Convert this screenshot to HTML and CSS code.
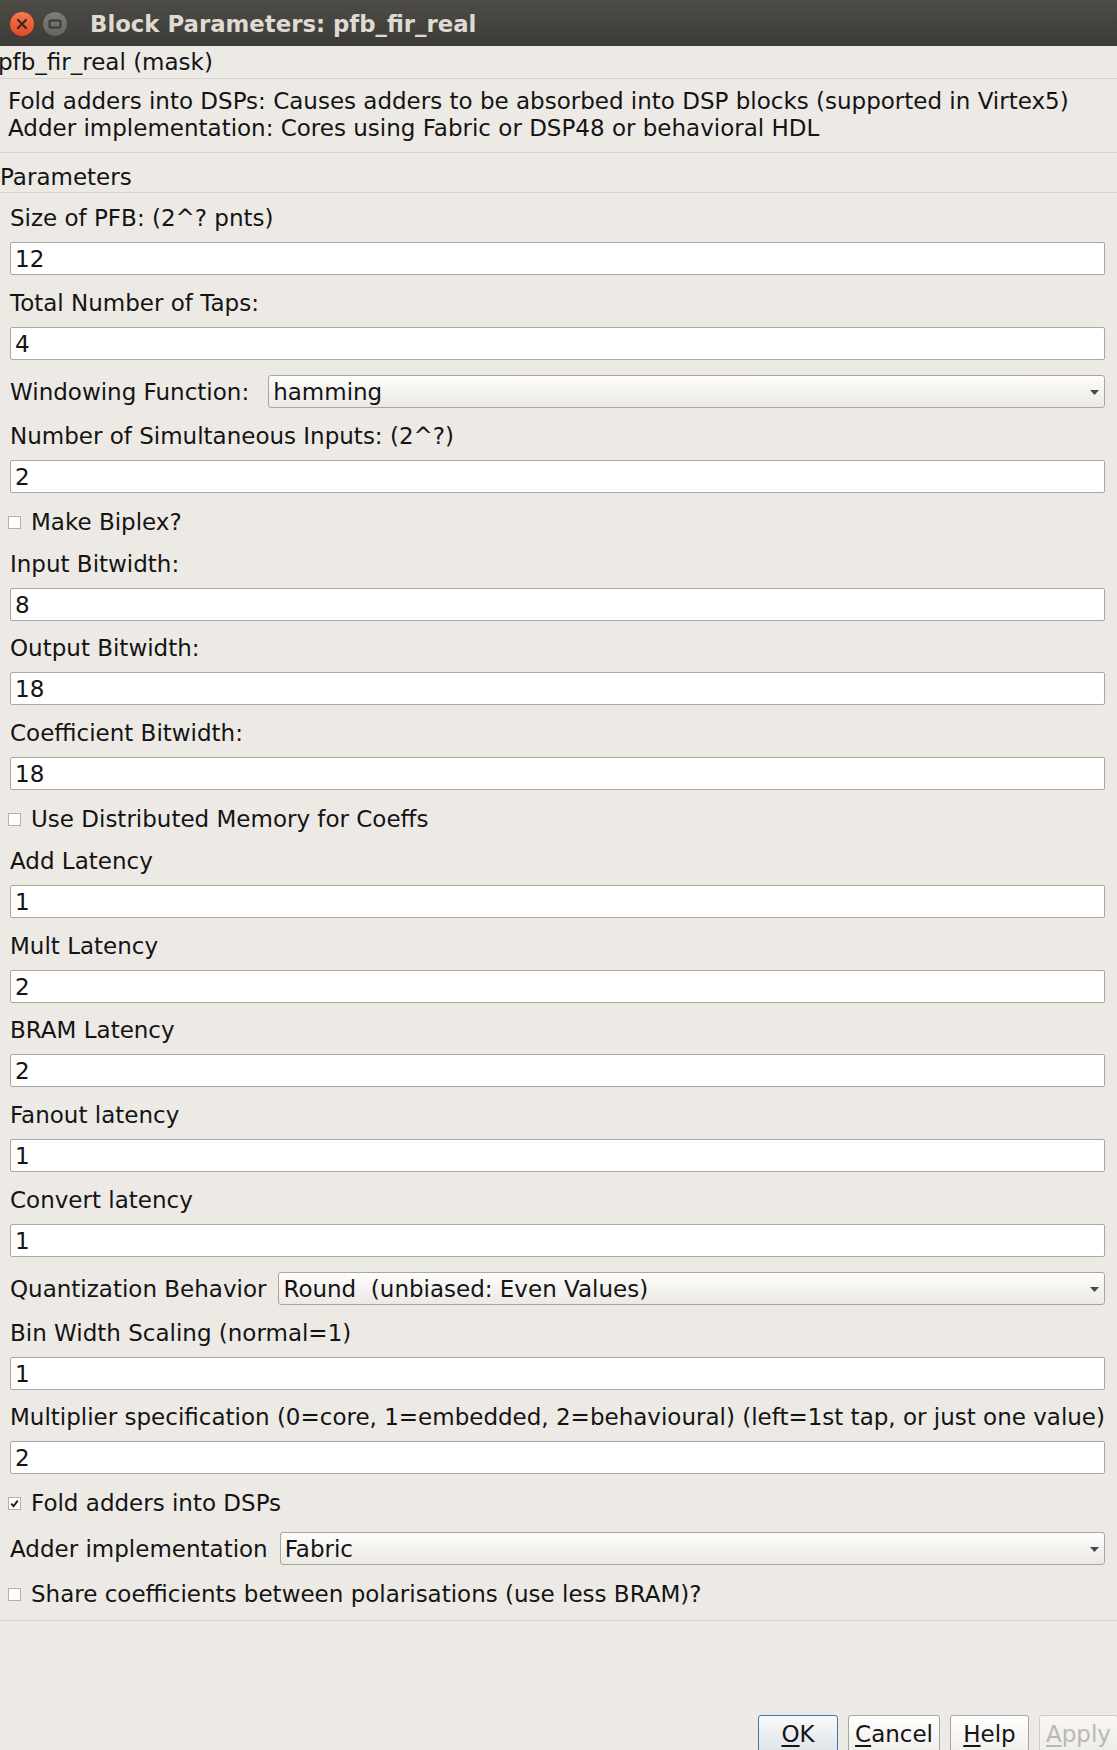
FILE: index.html
```html
<!DOCTYPE html>
<html>
<head>
<meta charset="utf-8">
<title>Block Parameters: pfb_fir_real</title>
<link rel="stylesheet" href="styles.css">
</head>
<body>
<div class="window">
  <div class="titlebar">
    <svg class="wbtn" width="26" height="26" viewBox="0 0 26 26">
      <defs>
        <linearGradient id="og" x1="0" y1="0" x2="0" y2="1">
          <stop offset="0" stop-color="#f47a55"/>
          <stop offset="1" stop-color="#df4a1f"/>
        </linearGradient>
        <linearGradient id="gg" x1="0" y1="0" x2="0" y2="1">
          <stop offset="0" stop-color="#7f7e78"/>
          <stop offset="1" stop-color="#64635d"/>
        </linearGradient>
      </defs>
      <circle cx="13" cy="13" r="12.5" fill="url(#og)" stroke="#3a2a22" stroke-width="0.6"/>
      <path d="M9 9 L17 17 M17 9 L9 17" stroke="#3b2620" stroke-width="2.2" stroke-linecap="round"/>
    </svg>
    <svg class="wbtn" width="26" height="26" viewBox="0 0 26 26">
      <circle cx="13" cy="13" r="12.5" fill="url(#gg)" stroke="#33322e" stroke-width="0.6"/>
      <rect x="7.5" y="9.5" width="11" height="7" rx="1.5" fill="none" stroke="#3a3935" stroke-width="2"/>
    </svg>
    <div class="title">Block Parameters: pfb_fir_real</div>
  </div>

  <div class="mask-name">pfb_fir_real (mask)</div>

  <div class="desc">
    <div>Fold adders into DSPs: Causes adders to be absorbed into DSP blocks (supported in Virtex5)</div>
    <div>Adder implementation: Cores using Fabric or DSP48 or behavioral HDL</div>
  </div>

  <div class="section-title">Parameters</div>

  <div class="form">
    <div class="lbl first">Size of PFB: (2^? pnts)</div>
    <div class="field">12</div>

    <div class="lbl">Total Number of Taps:</div>
    <div class="field">4</div>

    <div class="select-row">
      <span class="inline-lbl wide">Windowing Function:</span>
      <div class="select">hamming<svg class="arrow" width="9" height="5" viewBox="0 0 9 5"><path d="M0 0 H9 L4.5 5 Z" fill="#474747"/></svg></div>
    </div>

    <div class="lbl">Number of Simultaneous Inputs: (2^?)</div>
    <div class="field">2</div>

    <div class="check-row"><span class="box"></span>Make Biplex?</div>

    <div class="lbl">Input Bitwidth:</div>
    <div class="field">8</div>

    <div class="lbl">Output Bitwidth:</div>
    <div class="field">18</div>

    <div class="lbl">Coefficient Bitwidth:</div>
    <div class="field">18</div>

    <div class="check-row"><span class="box"></span>Use Distributed Memory for Coeffs</div>

    <div class="lbl">Add Latency</div>
    <div class="field">1</div>

    <div class="lbl">Mult Latency</div>
    <div class="field">2</div>

    <div class="lbl">BRAM Latency</div>
    <div class="field">2</div>

    <div class="lbl">Fanout latency</div>
    <div class="field">1</div>

    <div class="lbl">Convert latency</div>
    <div class="field">1</div>

    <div class="select-row">
      <span class="inline-lbl">Quantization Behavior</span>
      <div class="select">Round&nbsp; (unbiased: Even Values)<svg class="arrow" width="9" height="5" viewBox="0 0 9 5"><path d="M0 0 H9 L4.5 5 Z" fill="#474747"/></svg></div>
    </div>

    <div class="lbl">Bin Width Scaling (normal=1)</div>
    <div class="field">1</div>

    <div class="lbl">Multiplier specification (0=core, 1=embedded, 2=behavioural) (left=1st tap, or just one value)</div>
    <div class="field">2</div>

    <div class="check-row"><span class="box checked"><svg width="11" height="11" viewBox="0 0 11 11"><path d="M2.2 5.6 L4.5 8.2 L8.8 2.6" fill="none" stroke="#222222" stroke-width="1.9"/></svg></span>Fold adders into DSPs</div>

    <div class="select-row">
      <span class="inline-lbl">Adder implementation</span>
      <div class="select">Fabric<svg class="arrow" width="9" height="5" viewBox="0 0 9 5"><path d="M0 0 H9 L4.5 5 Z" fill="#474747"/></svg></div>
    </div>

    <div class="check-row"><span class="box"></span>Share coefficients between polarisations (use less BRAM)?</div>
  </div>

  <div class="footer">
    <div class="buttons">
      <div class="btn default"><u>O</u>K</div>
      <div class="btn"><u>C</u>ancel</div>
      <div class="btn"><u>H</u>elp</div>
      <div class="btn disabled"><u>A</u>pply</div>
    </div>
  </div>
</div>
</body>
</html>
```

FILE: styles.css
```css
html, body {
  margin: 0;
  padding: 0;
}

body {
  width: 1117px;
  height: 1750px;
  overflow: hidden;
  background: #edeae6;
  font-family: "DejaVu Sans", "Liberation Sans", sans-serif;
  font-size: 23px;
  color: #141414;
}

.window {
  display: flex;
  flex-direction: column;
  min-height: 1750px;
}

.titlebar {
  height: 46px;
  box-sizing: border-box;
  display: flex;
  align-items: center;
  padding-left: 9px;
  gap: 7px;
  background: linear-gradient(#4d4c47, #3c3b37);
}

.wbtn {
  flex: none;
  margin-top: 1px;
}

.title {
  margin-left: 15px;
  padding-top: 2px;
  font-weight: bold;
  font-size: 22.8px;
  color: #dfdbd2;
  white-space: nowrap;
}

.mask-name {
  line-height: 30px;
  padding: 1px 0 1px 0;
  margin-left: -2px;
  border-bottom: 1px solid #d8d5d0;
}

.desc {
  padding: 9px 8px 11px 8px;
  line-height: 26.7px;
  border-bottom: 1px solid #d8d5d0;
}

.section-title {
  line-height: 30px;
  padding: 9px 0 0 0;
  border-bottom: 1px solid #d8d5d0;
}

.form {
  display: flex;
  flex-direction: column;
  padding: 0 12px 12px 10px;
  border-bottom: 1px solid #d8d5d0;
}

.lbl {
  line-height: 30px;
  margin: 12.75px 0 9px 0;
  white-space: nowrap;
}

.lbl.first {
  margin-top: 10px;
}

.field {
  height: 33px;
  box-sizing: border-box;
  border: 1px solid #aaa7a1;
  border-radius: 2px;
  background: #ffffff;
  line-height: 30px;
  padding: 1px 4px 0 4px;
}

.select-row {
  display: flex;
  align-items: center;
  margin-top: 15px;
  height: 33px;
}

.inline-lbl {
  white-space: nowrap;
  margin-right: 12px;
  line-height: 30px;
  padding-top: 1px;
}

.inline-lbl.wide {
  margin-right: 19px;
}

.select {
  flex: 1;
  position: relative;
  height: 33px;
  box-sizing: border-box;
  border: 1px solid #a9a6a0;
  border-radius: 3px;
  background: linear-gradient(#fdfdfc, #ece9e5);
  line-height: 30px;
  padding: 1px 4px 0 4px;
  white-space: nowrap;
}

.arrow {
  position: absolute;
  right: 5px;
  top: 14px;
}

.check-row {
  display: flex;
  align-items: center;
  margin-top: 15px;
  margin-left: -2px;
  line-height: 28px;
  height: 28px;
  white-space: nowrap;
}

.check-row.after-lbl {
  margin-top: 16px;
}

.box {
  width: 13px;
  height: 13px;
  box-sizing: border-box;
  border: 1px solid #b3b0aa;
  background: #ffffff;
  margin-right: 10px;
  margin-top: 1px;
  flex: none;
  display: flex;
  align-items: center;
  justify-content: center;
}

.box svg {
  flex: none;
}

.footer {
  flex: 1;
  display: flex;
  flex-direction: column;
  justify-content: flex-start;
  padding-top: 94px;
}

.buttons {
  display: flex;
  justify-content: flex-end;
  gap: 10px;
  margin-right: -1px;
}

.btn {
  min-width: 79px;
  height: 40px;
  box-sizing: border-box;
  padding: 3px 6px 0 6px;
  line-height: 30px;
  text-align: center;
  border: 1px solid #a9a6a0;
  border-radius: 3px;
  background: linear-gradient(#ffffff, #f0eeeb);
  color: #141414;
}

.btn u {
  text-decoration-thickness: 2px;
  text-underline-offset: 3px;
}

.btn.default {
  min-width: 80px;
  border-color: #3d78ad;
  background: linear-gradient(#f9fafb, #dbe2e7);
}

.btn.disabled {
  color: #bab8b3;
  border-color: #cfccc7;
  background: linear-gradient(#f7f6f4, #efedea);
}
```
